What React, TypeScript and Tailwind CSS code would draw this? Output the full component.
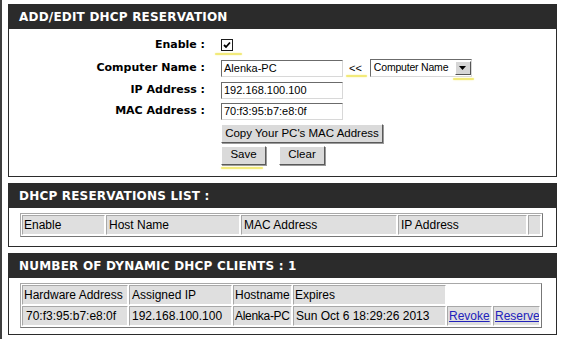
import React from "react";

const sans = "font-['Liberation_Sans',Arial,sans-serif]";
const verdana = "font-['DejaVu_Sans',Verdana,sans-serif]";

const Panel: React.FC<{ title: string; bodyClass: string; children: React.ReactNode }> = ({ title, bodyClass, children }) => (
    <section className="w-[549px]">
        <h2 className={`${verdana} h-[25px] bg-[#2b2b2b] text-white font-bold text-[12px] flex items-center pl-[11px] tracking-[0.2px]`}>
            {title}
        </h2>
        <div className={`border border-t-0 border-[#2b2b2b] bg-white ${bodyClass}`}>{children}</div>
    </section>
);

const Mark: React.FC<{ className: string }> = ({ className }) => (
    <span className={`absolute h-[2px] bg-[#f2ea7a] shadow-[0_0_2px_#f5f0a0] rounded-full ${className}`} />
);

const XpButton: React.FC<{ label: string; className: string }> = ({ label, className }) => (
    <button
        className={`${sans} h-[19px] text-[11.5px] whitespace-nowrap text-black bg-[#dadada] border border-t-white border-l-white border-r-[#5a5a5a] border-b-[#5a5a5a] shadow-[1px_1px_0_#9a9a9a] leading-none ${className}`}
    >
        {label}
    </button>
);

const Field: React.FC<{ value: string }> = ({ value }) => (
    <div className={`${sans} w-[122px] h-[17px] text-[11px] flex items-center pl-[2px] bg-white border border-t-[#6b6b6b] border-l-[#6b6b6b] border-r-[#d8d8d8] border-b-[#d8d8d8]`}>
        {value}
    </div>
);

const Label: React.FC<{ text: string }> = ({ text }) => (
    <div className={`${verdana} text-right font-bold text-[11px] text-black`}>{text}</div>
);

const cell = "bg-[#dfdfdf] border border-t-[#a8a8a8] border-l-[#a8a8a8] border-r-white border-b-white text-left font-normal px-[1px] h-[19px] whitespace-nowrap overflow-hidden";

export default function App() {
    return (
        <div className="w-[564px] h-[339px] bg-white border-l-2 border-[#3f3f3f] pl-[6px] pt-[4px] flex flex-col gap-[6px] overflow-hidden">
            <Panel title="ADD/EDIT DHCP RESERVATION" bodyClass="h-[148px] pt-[5px]">
                <div className="grid grid-cols-[196px_1fr] gap-x-[16px] items-center">
                    <div className="h-[22px] flex items-center justify-end"><Label text="Enable :" /></div>
                    <div className="h-[22px] flex items-center">
                        <span className="relative w-[12px] h-[12px] border border-[#1c1c1c] bg-white flex items-center justify-center">
                            <svg width="8" height="8" viewBox="0 0 8 8">
                                <path d="M1 4 L3 6 L7 1.5" stroke="#000" strokeWidth="1.8" fill="none" />
                            </svg>
                            <Mark className="left-[-7px] top-[13px] w-[27px]" />
                        </span>
                    </div>

                    <div className="h-[24px] flex items-center justify-end"><Label text="Computer Name :" /></div>
                    <div className="h-[24px] flex items-center">
                        <Field value="Alenka-PC" />
                        <span className={`${sans} relative text-[11px] ml-[6px] mr-[8px]`}>
                            &lt;&lt;
                            <Mark className="left-[-3px] top-[15px] w-[21px]" />
                        </span>
                        <div className={`${sans} relative w-[102px] h-[18px] text-[10.5px] tracking-[-0.2px] flex items-center pl-[3px] bg-white border border-t-[#6b6b6b] border-l-[#6b6b6b] border-r-[#d8d8d8] border-b-[#d8d8d8]`}>
                            <span className="flex-1 whitespace-nowrap">Computer Name</span>
                            <span className="w-[16px] h-[14px] bg-[#d6d6d6] border border-t-white border-l-white border-r-[#555] border-b-[#555] flex items-center justify-center">
                                <svg width="7" height="4" viewBox="0 0 7 4">
                                    <path d="M0 0 H7 L3.5 4 Z" fill="#000" />
                                </svg>
                            </span>
                            <Mark className="right-[-3px] top-[18px] w-[21px]" />
                        </div>
                    </div>

                    <div className="h-[21px] flex items-center justify-end"><Label text="IP Address :" /></div>
                    <div className="h-[21px] flex items-center"><Field value="192.168.100.100" /></div>

                    <div className="h-[21px] flex items-center justify-end"><Label text="MAC Address :" /></div>
                    <div className="h-[21px] flex items-center"><Field value="70:f3:95:b7:e8:0f" /></div>

                    <div className="h-[23px]" />
                    <div className="h-[23px] flex items-center">
                        <XpButton label="Copy Your PC's MAC Address" className="w-[162px]" />
                    </div>

                    <div className="h-[20px]" />
                    <div className="h-[20px] flex items-center gap-[13px]">
                        <span className="relative flex">
                            <XpButton label="Save" className="w-[45px]" />
                            <Mark className="left-0 top-[21px] w-[42px]" />
                        </span>
                        <XpButton label="Clear" className="w-[46px]" />
                    </div>
                </div>
            </Panel>

            <Panel title="DHCP RESERVATIONS LIST :" bodyClass="h-[39px] pt-[5px] pl-[11px]">
                <table className={`${sans} text-[12px] text-black table-fixed w-[523px] border-separate border-spacing-[1px] border border-[#a8a8a8] border-r-[#777] border-b-[#777]`}>
                    <thead>
                        <tr>
                            <th className={`${cell} w-[83px]`}>Enable</th>
                            <th className={`${cell} w-[134px] pl-[2px]`}>Host Name</th>
                            <th className={`${cell} w-[156px] pl-[2px]`}>MAC Address</th>
                            <th className={`${cell} w-[129px] pl-[2px]`}>IP Address</th>
                            <th className={cell}></th>
                        </tr>
                    </thead>
                </table>
            </Panel>

            <Panel title="NUMBER OF DYNAMIC DHCP CLIENTS : 1" bodyClass="h-[57px] pt-[5px] pl-[11px]">
                <table className={`${sans} text-[12px] text-black table-fixed w-[522px] border-separate border-spacing-[1px] border border-[#a8a8a8] border-r-[#777] border-b-[#777]`}>
                    <thead>
                        <tr>
                            <th className={`${cell} w-[106px]`}>Hardware Address</th>
                            <th className={`${cell} w-[103px] pl-[2px]`}>Assigned IP</th>
                            <th className={`${cell} w-[59px]`}>Hostname</th>
                            <th className={`${cell} w-[153px]`}>Expires</th>
                            <th className="h-[19px] w-[45px]"></th>
                            <th className="h-[19px]"></th>
                        </tr>
                    </thead>
                    <tbody>
                        <tr>
                            <td className={`${cell} pl-[3px]`}>70:f3:95:b7:e8:0f</td>
                            <td className={`${cell} pl-[2px]`}>192.168.100.100</td>
                            <td className={`${cell} tracking-[-0.3px]`}>Alenka-PC</td>
                            <td className={`${cell} pl-[2px]`}>Sun Oct 6 18:29:26 2013</td>
                            <td className={cell}>
                                <a className="text-[#2222bb] underline">Revoke</a>
                            </td>
                            <td className={cell}>
                                <a className="text-[#2222bb] underline">Reserve</a>
                            </td>
                        </tr>
                    </tbody>
                </table>
            </Panel>
        </div>
    );
}
